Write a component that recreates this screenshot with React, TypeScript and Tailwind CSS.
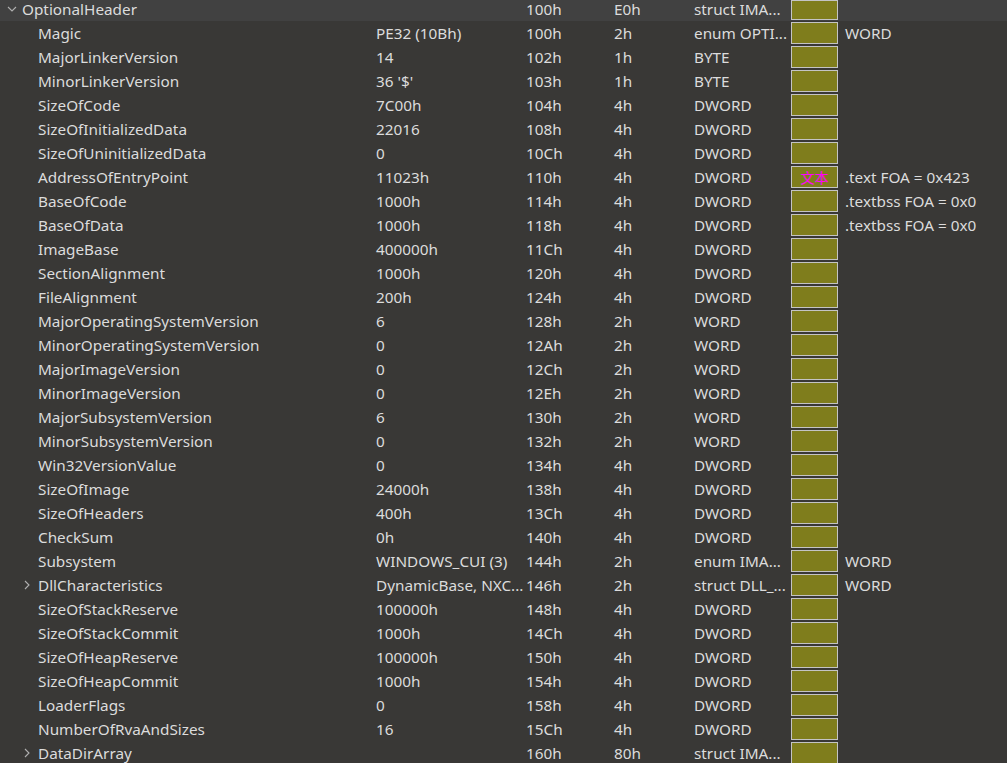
import React from 'react';

type Row = {
    name: string;
    value: string;
    start: string;
    size: string;
    type: string;
    comment?: string;
    expandable?: boolean;
    label?: string;
};

const rows: Row[] = [
    { name: 'Magic', value: 'PE32 (10Bh)', start: '100h', size: '2h', type: 'enum OPTI...', comment: 'WORD' },
    { name: 'MajorLinkerVersion', value: '14', start: '102h', size: '1h', type: 'BYTE' },
    { name: 'MinorLinkerVersion', value: "36 '$'", start: '103h', size: '1h', type: 'BYTE' },
    { name: 'SizeOfCode', value: '7C00h', start: '104h', size: '4h', type: 'DWORD' },
    { name: 'SizeOfInitializedData', value: '22016', start: '108h', size: '4h', type: 'DWORD' },
    { name: 'SizeOfUninitializedData', value: '0', start: '10Ch', size: '4h', type: 'DWORD' },
    { name: 'AddressOfEntryPoint', value: '11023h', start: '110h', size: '4h', type: 'DWORD', comment: '.text FOA = 0x423', label: '文本' },
    { name: 'BaseOfCode', value: '1000h', start: '114h', size: '4h', type: 'DWORD', comment: '.textbss FOA = 0x0' },
    { name: 'BaseOfData', value: '1000h', start: '118h', size: '4h', type: 'DWORD', comment: '.textbss FOA = 0x0' },
    { name: 'ImageBase', value: '400000h', start: '11Ch', size: '4h', type: 'DWORD' },
    { name: 'SectionAlignment', value: '1000h', start: '120h', size: '4h', type: 'DWORD' },
    { name: 'FileAlignment', value: '200h', start: '124h', size: '4h', type: 'DWORD' },
    { name: 'MajorOperatingSystemVersion', value: '6', start: '128h', size: '2h', type: 'WORD' },
    { name: 'MinorOperatingSystemVersion', value: '0', start: '12Ah', size: '2h', type: 'WORD' },
    { name: 'MajorImageVersion', value: '0', start: '12Ch', size: '2h', type: 'WORD' },
    { name: 'MinorImageVersion', value: '0', start: '12Eh', size: '2h', type: 'WORD' },
    { name: 'MajorSubsystemVersion', value: '6', start: '130h', size: '2h', type: 'WORD' },
    { name: 'MinorSubsystemVersion', value: '0', start: '132h', size: '2h', type: 'WORD' },
    { name: 'Win32VersionValue', value: '0', start: '134h', size: '4h', type: 'DWORD' },
    { name: 'SizeOfImage', value: '24000h', start: '138h', size: '4h', type: 'DWORD' },
    { name: 'SizeOfHeaders', value: '400h', start: '13Ch', size: '4h', type: 'DWORD' },
    { name: 'CheckSum', value: '0h', start: '140h', size: '4h', type: 'DWORD' },
    { name: 'Subsystem', value: 'WINDOWS_CUI (3)', start: '144h', size: '2h', type: 'enum IMA...', comment: 'WORD' },
    { name: 'DllCharacteristics', value: 'DynamicBase, NXC...', start: '146h', size: '2h', type: 'struct DLL_...', comment: 'WORD', expandable: true },
    { name: 'SizeOfStackReserve', value: '100000h', start: '148h', size: '4h', type: 'DWORD' },
    { name: 'SizeOfStackCommit', value: '1000h', start: '14Ch', size: '4h', type: 'DWORD' },
    { name: 'SizeOfHeapReserve', value: '100000h', start: '150h', size: '4h', type: 'DWORD' },
    { name: 'SizeOfHeapCommit', value: '1000h', start: '154h', size: '4h', type: 'DWORD' },
    { name: 'LoaderFlags', value: '0', start: '158h', size: '4h', type: 'DWORD' },
    { name: 'NumberOfRvaAndSizes', value: '16', start: '15Ch', size: '4h', type: 'DWORD' },
    { name: 'DataDirArray', value: '', start: '160h', size: '80h', type: 'struct IMA...', expandable: true },
];

function Chevron({ open }: { open?: boolean }) {
    return (
        <svg width="10" height="10" viewBox="0 0 10 10" className="shrink-0">
            {open ? (
                <path d="M1 3 L5 7 L9 3" fill="none" stroke="#b0b0b0" strokeWidth="1.1" />
            ) : (
                <path d="M3 1 L7 5 L3 9" fill="none" stroke="#b0b0b0" strokeWidth="1.1" />
            )}
        </svg>
    );
}

function Swatch({ label, header }: { label?: string; header?: boolean }) {
    return (
        <div
            className={`w-[47px] border border-[#c4c4c4] bg-[#7f7d1c] flex items-center justify-center shrink-0 ${header ? 'h-[20px] self-start' : 'h-[22px] my-[1px]'}`}
        >
            {label && (
                <span
                    className="text-[14px] text-[#ff00ff] leading-none"
                    style={{ fontFamily: '"Noto Sans CJK SC", sans-serif' }}
                >
                    {label}
                </span>
            )}
        </div>
    );
}

function TemplateRow({ row }: { row: Row }) {
    return (
        <div className="flex h-6 items-center whitespace-nowrap leading-6">
            <div className="w-[376px] flex items-center">
                <div className="w-[38px] flex justify-end pr-[6px]">
                    {row.expandable && <Chevron />}
                </div>
                <span>{row.name}</span>
            </div>
            <div className="w-[150px]">{row.value}</div>
            <div className="w-[88px]">{row.start}</div>
            <div className="w-[80px]">{row.size}</div>
            <div className="w-[97px]">{row.type}</div>
            <Swatch label={row.label} />
            <div className="pl-[7px]">{row.comment}</div>
        </div>
    );
}

export default function App() {
    return (
        <div
            className="w-[1007px] h-[763px] overflow-hidden bg-[#393836] text-[#dcdcdc] text-[15.3px]"
            style={{ fontFamily: '"Noto Sans", "Noto Sans CJK SC", sans-serif' }}
        >
            {/* Struct header, scrolled a few pixels past the top */}
            <div className="flex h-[21px] items-start whitespace-nowrap bg-[#414141] leading-[18px]">
                <div className="w-[376px] flex items-center">
                    <div className="w-[22px] flex justify-end pr-[5px]">
                        <Chevron open />
                    </div>
                    <span>OptionalHeader</span>
                </div>
                <div className="w-[150px]"></div>
                <div className="w-[88px]">100h</div>
                <div className="w-[80px]">E0h</div>
                <div className="w-[97px]">struct IMA...</div>
                <Swatch header />
            </div>
            {rows.map(r => (
                <TemplateRow key={r.name} row={r} />
            ))}
        </div>
    );
}
